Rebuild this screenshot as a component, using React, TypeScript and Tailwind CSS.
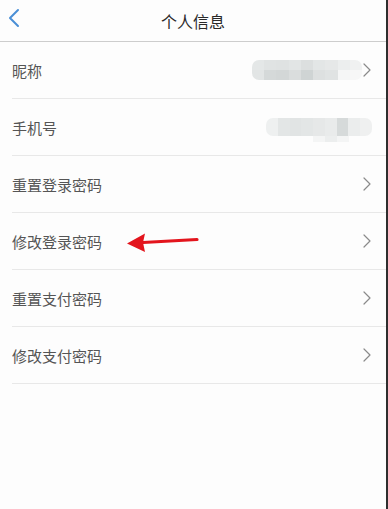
import { ChevronLeft, ChevronRight } from "lucide-react";

const rows = [
  { label: "昵称", blur: "nick" },
  { label: "手机号", blur: "phone" },
  { label: "重置登录密码" },
  { label: "修改登录密码", arrow: true },
  { label: "重置支付密码" },
  { label: "修改支付密码" },
];

const nickTop = ["#e4e7e7", "#e0e3e3", "#dfe2e2", "#e2e5e5", "#dcdfdf", "#e3e6e6", "#e6e8e8", "#eceeee", "#f0f1f1"];
const nickBottom = ["#e2e5e5", "#d5d9d9", "#d3d7d7", "#dadddd", "#cfd4d4", "#dde0e0", "#e0e3e3", "#f5f6f6", "#f7f7f7"];
const phoneCells = ["#eef0f0", "#e3e6e6", "#e1e4e4", "#e3e6e6", "#e6e8e8", "#e9ebeb", "#d6dada", "#ebeded", "#eff0f0"];

function Blur({ kind }: { kind: string }) {
  if (kind === "nick") {
    return (
      <div className="flex flex-col w-[110px] h-[20px] rounded-[7px] overflow-hidden -mr-[7px]">
        <div className="flex h-[10px]">
          {nickTop.map((c, i) => (
            <div key={i} className="flex-1" style={{ background: c }} />
          ))}
        </div>
        <div className="flex h-[10px]">
          {nickBottom.map((c, i) => (
            <div key={i} className="flex-1" style={{ background: c }} />
          ))}
        </div>
      </div>
    );
  }
  return (
    <div className="flex flex-col mt-[6px]">
      <div className="flex w-[106px] h-[18px] rounded-[7px] overflow-hidden">
        {phoneCells.map((c, i) => (
          <div key={i} className="flex-1" style={{ background: c }} />
        ))}
      </div>
      <div className="flex h-[6px] pl-[47px]">
        <div className="w-[12px] bg-[#f4f5f5]" />
        <div className="w-[12px] bg-[#eceeee]" />
        <div className="w-[12px] bg-[#f4f5f5]" />
      </div>
    </div>
  );
}

function RedArrow() {
  return (
    <svg width="74" height="24" viewBox="0 0 74 24" className="ml-[24px] mt-[2px]">
      <path d="M17 12.5 L71 9.5" stroke="#e3151d" strokeWidth="3.2" strokeLinecap="round" />
      <path d="M1 13.5 L19 3.5 L17 12.5 L19 22 Z" fill="#e3151d" />
    </svg>
  );
}

export default function App() {
  return (
    <div
      className="w-[388px] h-[509px] bg-[#fdfdfd] border-r-2 border-[#2e2e2e] flex flex-col"
      style={{ fontFamily: '"Noto Sans CJK SC", "Noto Sans", sans-serif' }}
    >
      <div className="h-[42px] flex items-center relative border-b border-[#cdcdcd] shrink-0">
        <ChevronLeft className="absolute -left-[2px] top-[2px] text-[#4a8fd6]" size={32} strokeWidth={1.5} />
        <div className="flex-1 text-center text-[16px] text-[#2a2a2a] leading-none">个人信息</div>
      </div>
      <div className="pl-[12px] flex flex-col">
        {rows.map((r) => (
          <div key={r.label} className="h-[57px] flex items-center border-b border-[#e8e8e8] pr-[14px]">
            <span className="text-[15px] text-[#555555] leading-none">{r.label}</span>
            {r.arrow && <RedArrow />}
            <div className="flex-1" />
            {r.blur && <Blur kind={r.blur} />}
            {r.blur !== "phone" && (
              <ChevronRight className="text-[#8a8a8a] -mr-[7px]" size={24} strokeWidth={1.2} />
            )}
          </div>
        ))}
      </div>
    </div>
  );
}
